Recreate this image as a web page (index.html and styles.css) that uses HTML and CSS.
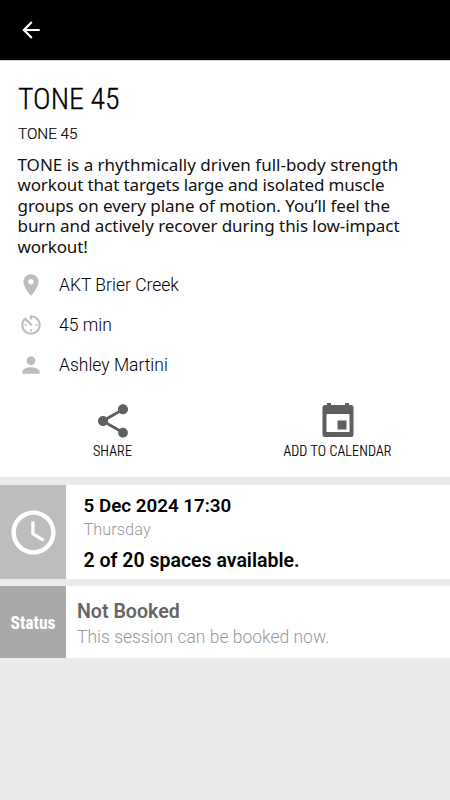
FILE: index.html
```html
<!DOCTYPE html>
<html lang="en">
<head>
    <meta charset="UTF-8">
    <meta name="viewport" content="width=device-width, initial-scale=1.0">
    <title>TONE 45</title>
    <link rel="stylesheet" href="styles.css">
</head>
<body>
    <header class="topbar">
        <a class="back" href="#" aria-label="Back">
            <svg viewBox="0 0 24 24"><path d="M20 11H7.83l5.59-5.59L12 4l-8 8 8 8 1.41-1.41L7.83 13H20v-2z"/></svg>
        </a>
    </header>
    <main>
        <section class="details">
            <h1>TONE 45</h1>
            <p class="subtitle">TONE 45</p>
            <p class="description">
                <span>TONE is a rhythmically driven full-body strength</span>
                <span class="tight">workout that targets large and isolated muscle</span>
                <span class="snug">groups on every plane of motion. You’ll feel the</span>
                <span class="snug">burn and actively recover during this low-impact</span>
                <span class="tight">workout!</span>
            </p>
            <ul class="facts">
                <li>
                    <svg viewBox="0 0 24 24"><path d="M12 2C8.13 2 5 5.13 5 9c0 5.25 7 13 7 13s7-7.75 7-13c0-3.87-3.13-7-7-7zm0 9.5a2.5 2.5 0 0 1 0-5 2.5 2.5 0 0 1 0 5z"/></svg>
                    <span>AKT Brier Creek</span>
                </li>
                <li>
                    <svg viewBox="0 0 24 24"><path d="M11 17a1 1 0 1 0 2 0 1 1 0 0 0-2 0zm0-14v4h2V5.08c3.39.49 6 3.39 6 6.92 0 3.87-3.13 7-7 7s-7-3.13-7-7c0-1.68.59-3.22 1.58-4.42L12 13l1.41-1.41-6.8-6.8v.02C4.42 6.45 3 9.05 3 12c0 4.97 4.02 9 9 9a9 9 0 0 0 0-18h-1zm7 9a1 1 0 1 0-2 0 1 1 0 0 0 2 0zM6 12a1 1 0 1 0 2 0 1 1 0 0 0-2 0z"/></svg>
                    <span>45 min</span>
                </li>
                <li>
                    <svg viewBox="0 0 24 24"><path d="M12 12c2.21 0 4-1.79 4-4s-1.79-4-4-4-4 1.79-4 4 1.79 4 4 4zm0 2c-2.67 0-8 1.34-8 4v2h16v-2c0-2.66-5.33-4-8-4z"/></svg>
                    <span>Ashley Martini</span>
                </li>
            </ul>
            <div class="actions">
                <a class="action" href="#">
                    <svg viewBox="0 0 24 24"><path d="M18 16.08c-.76 0-1.44.3-1.96.77L8.91 12.7c.05-.23.09-.46.09-.7s-.04-.47-.09-.7l7.05-4.11c.54.5 1.25.81 2.04.81 1.66 0 3-1.34 3-3s-1.34-3-3-3-3 1.34-3 3c0 .24.04.47.09.7L8.04 9.81C7.5 9.31 6.79 9 6 9c-1.66 0-3 1.34-3 3s1.34 3 3 3c.79 0 1.5-.31 2.04-.81l7.12 4.16c-.05.21-.08.43-.08.65 0 1.61 1.31 2.92 2.92 2.92s2.92-1.31 2.92-2.92-1.31-2.92-2.92-2.92z"/></svg>
                    <span>SHARE</span>
                </a>
                <a class="action" href="#">
                    <svg viewBox="0 0 40 40"><path d="M9 2h4v2h14V2h4v2h2a2.500 2.500 0 0 1 2.500 2.500V33.500A2.500 2.500 0 0 1 33 36H7a2.500 2.500 0 0 1-2.500-2.500V6.500A2.500 2.500 0 0 1 7 4h2zM8.500 13v18h23V13zM19.500 19.500h9v9h-9z"/></svg>
                    <span>ADD TO CALENDAR</span>
                </a>
            </div>
        </section>
        <section class="card schedule">
            <div class="card-side">
                <svg viewBox="0 0 24 24"><path d="M11.99 2C6.47 2 2 6.48 2 12s4.47 10 9.99 10C17.52 22 22 17.52 22 12S17.52 2 11.99 2zM12 20a8 8 0 1 1 0-16 8 8 0 0 1 0 16zm.5-13H11v6l5.25 3.15.75-1.23-4.5-2.67z"/></svg>
            </div>
            <div class="card-body">
                <p class="date">5 Dec 2024 17:30</p>
                <p class="muted day">Thursday</p>
                <p class="spaces">2 of 20 spaces available.</p>
            </div>
        </section>
        <section class="card status">
            <div class="card-side">Status</div>
            <div class="card-body">
                <p class="state">Not Booked</p>
                <p class="muted note">This session can be booked now.</p>
            </div>
        </section>
    </main>
</body>
</html>
```
FILE: styles.css
```css
:root {
    --page: #ebebeb;
    --icon: #bdbdbd;
    --action: #5f5f5f;
    --muted: #999;
}

* {
    box-sizing: border-box;
}

body {
    margin: 0;
    min-height: 100vh;
    background: var(--page);
    color: #000;
    font-family: Roboto, "Liberation Sans", sans-serif;
}

h1, p, ul {
    margin: 0;
    padding: 0;
}

svg {
    display: block;
    fill: currentColor;
}

a {
    color: inherit;
    text-decoration: none;
}

.topbar {
    display: flex;
    height: 60px;
    padding: 17px 18px;
    background: #000;
    color: #fff;
}

.back svg {
    width: 26px;
    height: 26px;
}

.details {
    height: 417px;
    padding: 20px 18px 0;
    border-top: 1px solid #ccc;
    background: #fff;
}

h1 {
    font-family: "Roboto Condensed", Roboto, sans-serif;
    font-stretch: 75%;
    font-size: 29.8px;
    font-weight: 300;
    line-height: 36px;
    -webkit-text-stroke: 0.3px #000;
}

.subtitle {
    margin-top: 8px;
    font-size: 15.3px;
    font-weight: 300;
    line-height: 18px;
    -webkit-text-stroke: 0.2px #000;
}

.description {
    margin-top: 12px;
    margin-left: -0.5px;
    color: #111;
    font-family: "Noto Sans", sans-serif;
    font-size: 17px;
    line-height: 20.4px;
    white-space: nowrap;
}

.description span {
    display: block;
}

.description .tight {
    letter-spacing: -0.14px;
}

.description .snug {
    letter-spacing: -0.06px;
}

.facts {
    margin-top: 8px;
    list-style: none;
}

.facts li {
    display: flex;
    align-items: center;
    height: 40px;
    gap: 15px;
    font-size: 17.5px;
    font-weight: 300;
}

.facts svg {
    width: 26px;
    height: 26px;
    color: var(--icon);
}

.actions {
    display: grid;
    grid-template-columns: 1fr 1fr;
    margin: 16px -18px 0;
}

.action {
    display: flex;
    flex-direction: column;
    align-items: center;
    font-family: "Roboto Condensed", Roboto, sans-serif;
    font-stretch: 75%;
    font-size: 14px;
    font-weight: 300;
    letter-spacing: 0.15px;
    line-height: 20px;
    -webkit-text-stroke: 0.2px #000;
}

.action svg {
    width: 40px;
    height: 40px;
    color: var(--action);
}

.card {
    display: flex;
    background: #fff;
}

.card-side {
    display: flex;
    flex: 0 0 66px;
    align-items: center;
    justify-content: center;
    color: #fff;
}

.muted {
    color: var(--muted);
    font-weight: 300;
}

.schedule {
    height: 94px;
    margin-top: 8px;
}

.schedule .card-side {
    background: #bdbdbd;
}

.schedule svg {
    width: 53px;
    height: 53px;
}

.schedule .card-body {
    padding: 10px 17.5px;
}

.date, .spaces {
    font-size: 18.8px;
    font-weight: 600;
    line-height: 23px;
}

.day {
    margin-top: 1px;
    font-size: 16.4px;
    line-height: 22px;
}

.spaces {
    margin-top: 8px;
    font-size: 19.5px;
}

.status {
    height: 72px;
    margin-top: 7px;
}

.status .card-side {
    padding-top: 2px;
    background: #a9a9a9;
    font-family: "Roboto Condensed", Roboto, sans-serif;
    font-stretch: 75%;
    font-size: 17.6px;
    font-weight: 700;
}

.status .card-body {
    padding: 14px 11px 0;
}

.state {
    color: #666;
    font-size: 19.6px;
    font-weight: 600;
    line-height: 24px;
}

.note {
    font-size: 17.5px;
    line-height: 26px;
}
```
